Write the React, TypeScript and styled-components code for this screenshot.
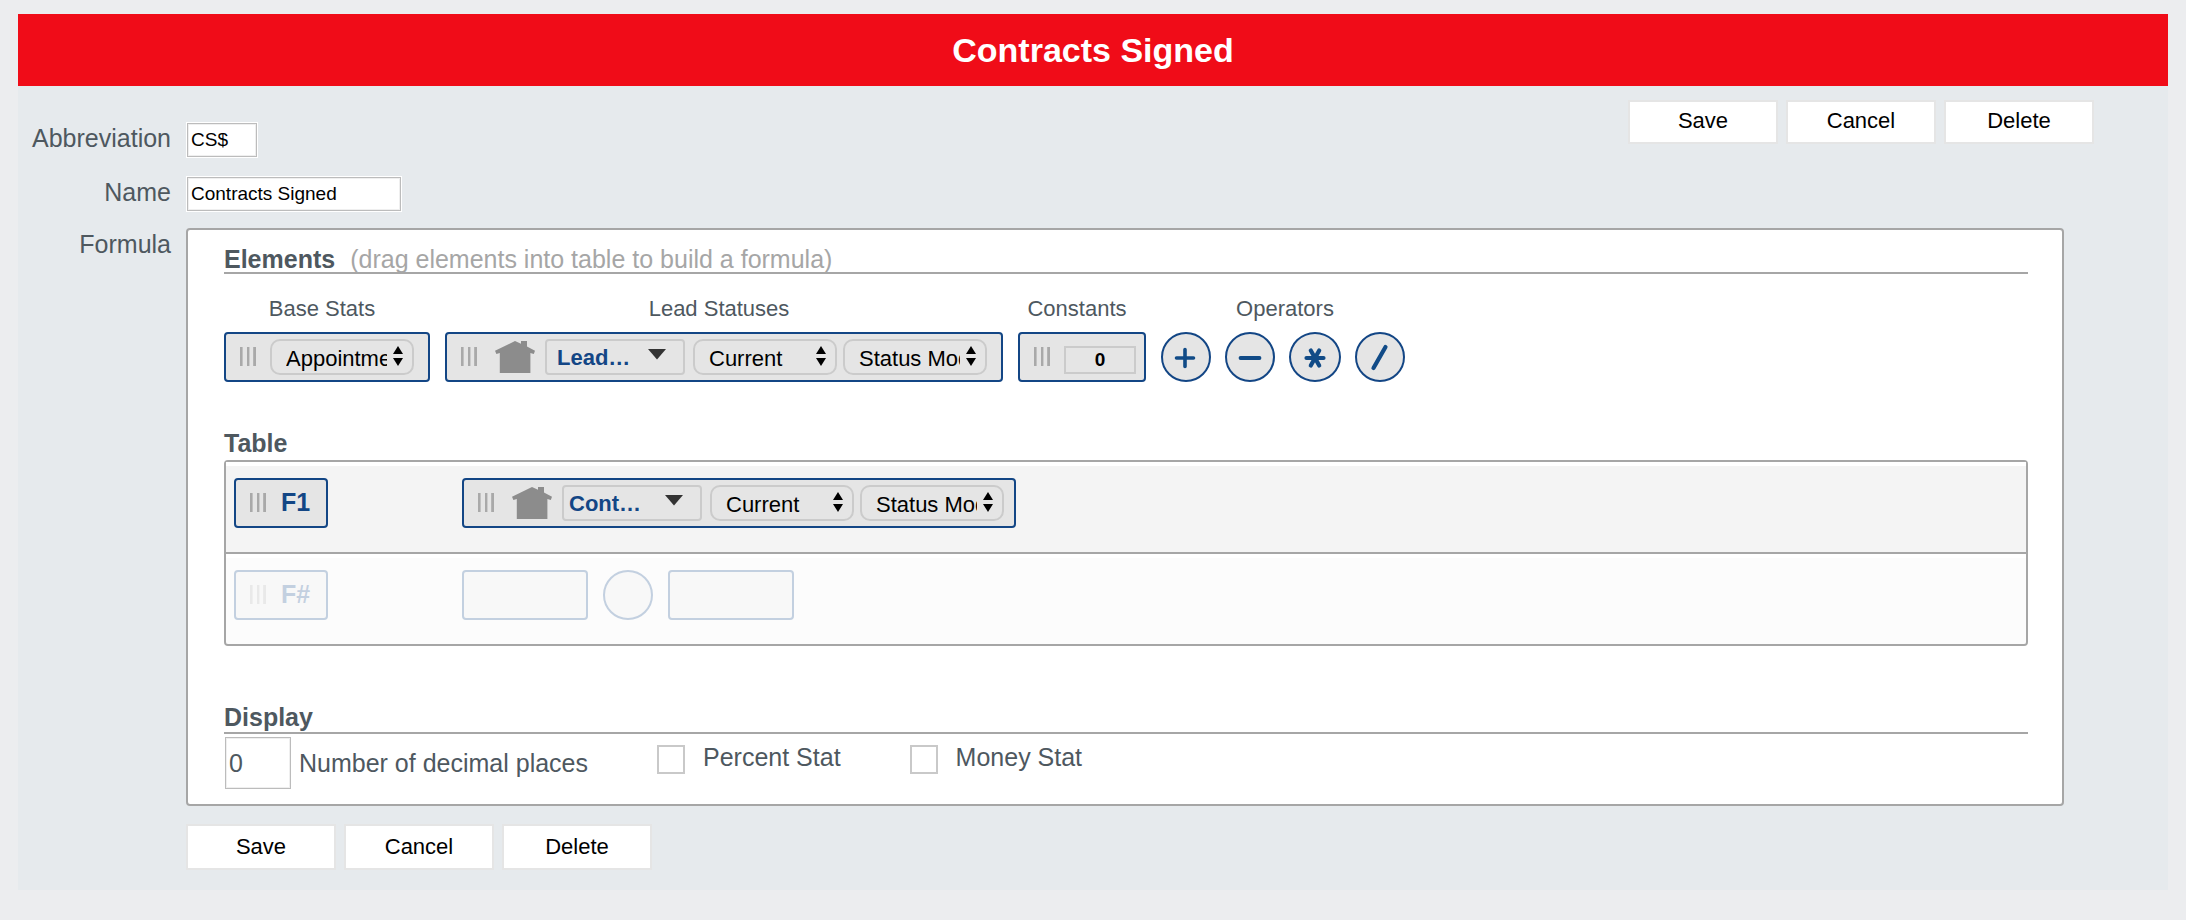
import React from 'react';
import styled, { createGlobalStyle } from 'styled-components';

const slate = '#4e585f';
const navy = '#134685';
const line = '#a6a6a6';

const GlobalStyle = createGlobalStyle`
  *, *::before, *::after { box-sizing: border-box; }
  body {
    margin: 0;
    background: #ecedef;
    color: ${slate};
    font-family: "Liberation Sans", Arial, Helvetica, sans-serif;
    font-size: 25px;
    line-height: 28px;
  }
  button, input, select { font-family: inherit; margin: 0; }
`;

const Page = styled.main`
  padding: 14px 18px 30px;
`;

const Banner = styled.header`
  display: flex;
  align-items: center;
  justify-content: center;
  height: 72px;
  background: #f00c18;
  color: #fff;
`;

const Title = styled.h1`
  margin: 0;
  font-size: 34px;
  line-height: 40px;
`;

const StatForm = styled.form`
  padding-bottom: 20px;
  background: #e6eaed;
`;

const TopArea = styled.div`
  display: flex;
  align-items: flex-start;
  padding: 14px 74px 16px 0;
`;

const Fields = styled.div`
  flex: 1;
  display: flex;
  flex-direction: column;
  gap: 18px;
  padding-top: 22px;
`;

const FieldRow = styled.div`
  display: grid;
  grid-template-columns: 153px minmax(0, 1fr);
  column-gap: 15px;
  align-items: start;
`;

const FormulaRow = styled(FieldRow)`
  padding-right: 104px;
`;

const FieldLabel = styled.label`
  padding-top: 2px;
  text-align: right;
`;

const TextInput = styled.input<{ $width: number }>`
  width: ${(p) => p.$width}px;
  height: 36px;
  padding: 0 4px;
  border: 1px solid #fff;
  border-radius: 0;
  background: #fff;
  box-shadow: inset 0 0 0 1px #bcbcbc, inset 0 0 0 2px #efefef;
  color: #000;
  font-size: 19px;
`;

const PlacesInput = styled(TextInput)`
  height: 54px;
  color: ${slate};
  font-size: 25px;
`;

const Actions = styled.div`
  display: flex;
  gap: 8px;
`;

const BottomActions = styled(Actions)`
  padding: 18px 0 0 168px;
`;

const ActionButton = styled.button<{ $tall?: boolean }>`
  width: 150px;
  padding: ${(p) => (p.$tall ? '8px 0' : '6px 0 8px')};
  border: 2px solid #e5e5e5;
  background: #fff;
  color: #000;
  font-size: 22px;
  line-height: 26px;
`;

const Panel = styled.section`
  padding: 16px 34px 14px 36px;
  border: 2px solid ${line};
  border-radius: 4px;
  background: #fff;
`;

const Heading = styled.h2`
  margin: 0;
  font-size: 25px;
  line-height: 26px;
`;

const ElementsHeading = styled(Heading)`
  display: flex;
  gap: 15px;
  border-bottom: 2px solid ${line};
`;

const TableHeading = styled(Heading)`
  margin: 48px 0 4px;
`;

const DisplayHeading = styled(Heading)`
  margin-top: 58px;
  padding-bottom: 2px;
  border-bottom: 2px solid ${line};
`;

const Hint = styled.span`
  color: ${line};
  font-weight: 400;
`;

const Palette = styled.div`
  display: flex;
  gap: 15px;
  padding-top: 22px;
`;

const PaletteGroup = styled.div`
  display: flex;
  flex-direction: column;
  gap: 10px;
`;

const GroupLabel = styled.span`
  padding-right: 10px;
  font-size: 22px;
  line-height: 26px;
  text-align: center;
`;

const Chip = styled.div<{ $end?: number }>`
  display: flex;
  align-items: center;
  width: fit-content;
  height: 50px;
  padding: 0 ${(p) => p.$end ?? 14}px 0 14px;
  border: 2px solid ${navy};
  border-radius: 4px;
  background: #e5e5e5;
`;

const Grip = styled.svg`
  flex: none;
  width: 16px;
  height: 19px;
  margin: 0 14px 2px 0;
  fill: #a9a9a9;
`;

const House = styled.svg`
  flex: none;
  width: 40px;
  height: 32px;
  margin: 0 10px 0 4px;
  fill: #8c8c8c;
`;

const StatusPicker = styled.button<{ $tight?: boolean }>`
  display: flex;
  align-items: center;
  justify-content: space-between;
  width: 140px;
  height: 36px;
  margin-right: 8px;
  padding: 2px 16px 0 ${(p) => (p.$tight ? 5 : 10)}px;
  border: 2px solid #cbcbcb;
  border-radius: 4px;
  background: transparent;
  color: ${navy};
  font-size: 22px;
  font-weight: 700;
  line-height: 26px;

  svg { width: 20px; height: 11px; margin-bottom: 8px; }
`;

const SelectBox = styled.span`
  position: relative;
  display: block;
  width: 144px;
  height: 36px;

  & + & { margin-left: 6px; }

  svg {
    position: absolute;
    top: 7px;
    right: 11px;
    width: 10px;
    height: 20px;
    pointer-events: none;
  }
`;

const Select = styled.select`
  appearance: none;
  width: 100%;
  height: 100%;
  padding: 2px 25px 0 14px;
  border: 2px solid #cbcbcb;
  border-radius: 10px;
  background: #e5e5e5;
  color: #000;
  font-size: 22px;
`;

const ConstantInput = styled.input`
  width: 72px;
  height: 28px;
  padding: 0;
  margin-top: 6px;
  border: 2px solid #cbcbcb;
  background: transparent;
  color: #000;
  font-size: 19px;
  font-weight: 700;
  text-align: center;
`;

const OperatorList = styled.div`
  display: flex;
  gap: 14px;
  padding-right: 14px;
`;

const Operator = styled.button<{ $wide?: boolean }>`
  display: flex;
  align-items: center;
  justify-content: center;
  width: ${(p) => (p.$wide ? 52 : 50)}px;
  height: 50px;
  padding: 0;
  border: 2px solid ${navy};
  border-radius: 50%;
  background: #e5e5e5;

  svg { width: 30px; height: 30px; stroke: #114b87; stroke-linecap: round; fill: none; }
`;

const FormulaTable = styled.table`
  width: 100%;
  border: 2px solid ${line};
  border-radius: 4px;
  border-spacing: 0;
`;

const Cell = styled.td<{ $ghost?: boolean }>`
  height: ${(p) => (p.$ghost ? 90 : 92)}px;
  padding: 12px 0 0 8px;
  border-top: 4px solid #fff;
  border-bottom: ${(p) => (p.$ghost ? '0' : `2px solid ${line}`)};
  background: #f4f4f4;
  opacity: ${(p) => (p.$ghost ? 0.25 : 1)};
  vertical-align: top;

  &:first-child { width: 236px; }
  & + & { padding-left: 0; }
`;

const RowName = styled.strong`
  width: 46px;
  padding: 0 0 2px 1px;
  color: ${navy};
`;

const Slots = styled.div`
  display: flex;
  gap: 15px;
`;

const Slot = styled.div<{ $round?: boolean }>`
  width: ${(p) => (p.$round ? 50 : 126)}px;
  height: 50px;
  border: 2px solid ${navy};
  border-radius: ${(p) => (p.$round ? '50%' : '4px')};
  background: #e5e5e5;
`;

const DisplayOptions = styled.div`
  display: flex;
  gap: 69px;
  padding-top: 2px;
`;

const PlacesLabel = styled.label`
  display: flex;
  align-items: center;
  gap: 7px;
`;

const CheckLabel = styled.label`
  display: flex;
  align-items: flex-start;
  gap: 18px;
  padding-top: 7px;
`;

const Checkbox = styled.input`
  appearance: none;
  width: 28px;
  height: 29px;
  margin-top: 2px;
  border: 2px solid #c9c9c9;
  background: #fff;
`;

const GripIcon = () => (
  <Grip viewBox="0 0 16 19" aria-hidden="true">
    <rect x="0" width="2.6" height="19" />
    <rect x="7" width="2.4" height="19" />
    <rect x="13.2" width="2.8" height="19" />
  </Grip>
);

const HouseIcon = () => (
  <House viewBox="0 0 40 32" aria-hidden="true">
    <path d="M20 0L26 2.8V0H32V5.6L40 9.8L38.8 13L35.4 12V32H4.8V12L1.4 13L0 9.8Z" />
  </House>
);

const Picker = ({ label, options }: { label: string; options: string[] }) => (
  <SelectBox>
    <Select aria-label={label}>
      {options.map((o) => (
        <option key={o}>{o}</option>
      ))}
    </Select>
    <svg viewBox="0 0 10 20" aria-hidden="true">
      <path d="M5 0L10 8H0ZM5 20L0 12H10Z" fill="#000" />
    </svg>
  </SelectBox>
);

const LeadStatusChip = ({ status, placed }: { status: string; placed?: boolean }) => (
  <Chip $end={placed ? 10 : 14}>
    <GripIcon />
    <HouseIcon />
    <StatusPicker type="button" $tight={placed}>
      {status}
      <svg viewBox="0 0 20 11" aria-hidden="true">
        <path d="M1 0H19L10 10.5Z" fill="#333" />
      </svg>
    </StatusPicker>
    <Picker label="Period" options={['Current', 'Previous']} />
    <Picker label="Counted by" options={['Status Modified', 'Status Created']} />
  </Chip>
);

const ActionButtons = ({ tall }: { tall?: boolean }) => (
  <>
    {['Save', 'Cancel', 'Delete'].map((name) => (
      <ActionButton key={name} type="button" $tall={tall}>
        {name}
      </ActionButton>
    ))}
  </>
);

const operators = [
  { name: 'Add', d: 'M5.5 16H22.5M14 7.5V24.5', width: 3.6 },
  { name: 'Subtract', d: 'M5.5 16H24.5', width: 3.8 },
  { name: 'Multiply', d: 'M6.5 16H23.5M10.8 8.5L19.2 23.5M19.2 8.5L10.8 23.5', width: 4.2, wide: true },
  { name: 'Divide', d: 'M20.5 5L8.5 26', width: 4.2 },
];

export default function App() {
  return (
    <Page>
      <GlobalStyle />
      <Banner>
        <Title>Contracts Signed</Title>
      </Banner>
      <StatForm>
        <TopArea>
          <Fields>
            <FieldRow>
              <FieldLabel htmlFor="abbreviation">Abbreviation</FieldLabel>
              <TextInput id="abbreviation" $width={72} defaultValue="CS$" />
            </FieldRow>
            <FieldRow>
              <FieldLabel htmlFor="name">Name</FieldLabel>
              <TextInput id="name" $width={216} defaultValue="Contracts Signed" />
            </FieldRow>
          </Fields>
          <Actions>
            <ActionButtons />
          </Actions>
        </TopArea>

        <FormulaRow>
          <FieldLabel as="span">Formula</FieldLabel>
          <Panel aria-label="Formula">
            <ElementsHeading>
              Elements
              <Hint>(drag elements into table to build a formula)</Hint>
            </ElementsHeading>
            <Palette>
              <PaletteGroup>
                <GroupLabel>Base Stats</GroupLabel>
                <Chip>
                  <GripIcon />
                  <Picker label="Base stat" options={['Appointments', 'Calls']} />
                </Chip>
              </PaletteGroup>
              <PaletteGroup>
                <GroupLabel>Lead Statuses</GroupLabel>
                <LeadStatusChip status="Lead…" />
              </PaletteGroup>
              <PaletteGroup>
                <GroupLabel>Constants</GroupLabel>
                <Chip $end={8}>
                  <GripIcon />
                  <ConstantInput aria-label="Constant" defaultValue="0" />
                </Chip>
              </PaletteGroup>
              <PaletteGroup>
                <GroupLabel>Operators</GroupLabel>
                <OperatorList>
                  {operators.map((op) => (
                    <Operator key={op.name} type="button" aria-label={op.name} $wide={op.wide}>
                      <svg viewBox="0 0 30 30" strokeWidth={op.width}>
                        <path d={op.d} />
                      </svg>
                    </Operator>
                  ))}
                </OperatorList>
              </PaletteGroup>
            </Palette>

            <TableHeading>Table</TableHeading>
            <FormulaTable>
              <tbody>
                <tr>
                  <Cell>
                    <Chip $end={0}>
                      <GripIcon />
                      <RowName>F1</RowName>
                    </Chip>
                  </Cell>
                  <Cell>
                    <LeadStatusChip status="Cont…" placed />
                  </Cell>
                </tr>
                <tr>
                  <Cell $ghost>
                    <Chip $end={0}>
                      <GripIcon />
                      <RowName>F#</RowName>
                    </Chip>
                  </Cell>
                  <Cell $ghost>
                    <Slots>
                      <Slot />
                      <Slot $round />
                      <Slot />
                    </Slots>
                  </Cell>
                </tr>
              </tbody>
            </FormulaTable>

            <DisplayHeading>Display</DisplayHeading>
            <DisplayOptions>
              <PlacesLabel>
                <PlacesInput $width={68} defaultValue="0" />
                Number of decimal places
              </PlacesLabel>
              <CheckLabel>
                <Checkbox type="checkbox" />
                Percent Stat
              </CheckLabel>
              <CheckLabel>
                <Checkbox type="checkbox" />
                Money Stat
              </CheckLabel>
            </DisplayOptions>
          </Panel>
        </FormulaRow>

        <BottomActions>
          <ActionButtons tall />
        </BottomActions>
      </StatForm>
    </Page>
  );
}
